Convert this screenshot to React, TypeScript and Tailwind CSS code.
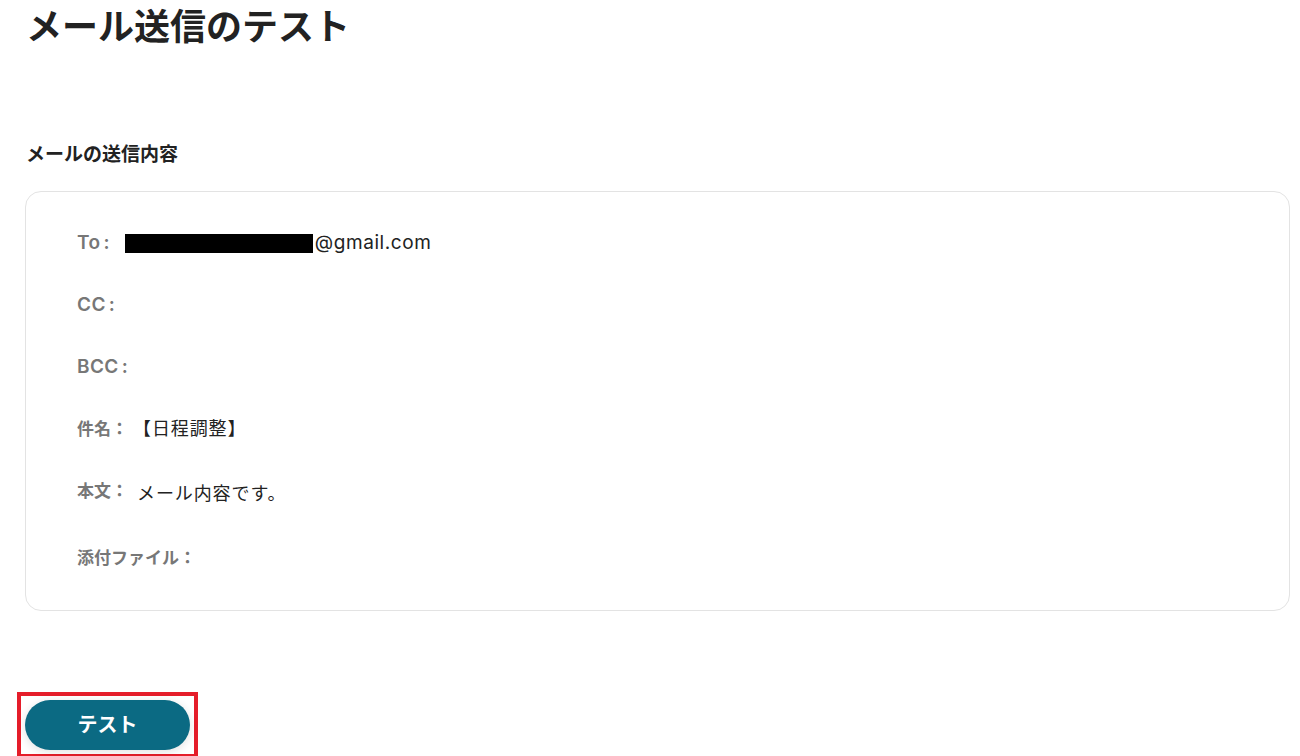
import React from "react";

const font = { fontFamily: '"Inter", "Noto Sans CJK JP", sans-serif' };

function Row({ label, latin = false, children, gap = "ml-[9px]" }: { label: string; latin?: boolean; children?: React.ReactNode; gap?: string }) {
  return (
    <div className="flex items-start">
      {latin ? (
        <span className="text-[19px] leading-[24px] font-semibold tracking-[0.02em] text-[#777777] shrink-0">
          {label}
          <span className="ml-[3px]">:</span>
        </span>
      ) : (
        <span className="text-[17px] leading-[24px] font-bold text-[#777777] shrink-0">{label}</span>
      )}
      <div className={`${gap} text-[18px] leading-[24px] tracking-[0.05em] text-[#222222]`}>{children}</div>
    </div>
  );
}

export default function App() {
  return (
    <div className="min-h-[756px] bg-white px-[25px] pr-[10px]" style={font}>
      <h1 className="text-[36px] leading-[54px] font-bold text-[#222222] pl-[1px]">メール送信のテスト</h1>
      <h2 className="mt-[88px] text-[19px] leading-[26px] font-bold text-[#222222] pl-[1px]">メールの送信内容</h2>
      <div className="mt-[23px] rounded-[16px] border border-[#e3e3e3] pl-[51px] pt-[39px] pb-[40px] flex flex-col gap-[38px]">
        <Row label="To" latin gap="ml-[15px]">
          <div className="flex items-center">
            <span className="inline-block w-[188px] h-[19px] bg-black" />
            <span className="ml-[2px] text-[19px] tracking-[0.03em] text-[#222222]">@gmail.com</span>
          </div>
        </Row>
        <Row label="CC" latin />
        <Row label="BCC" latin />
        <Row label="件名：">
          <span className="-ml-[4px]">【日程調整】</span>
        </Row>
        <Row label="本文：">
          <div className="pt-[3px] pb-[2px]">メール内容です。</div>
        </Row>
        <Row label="添付ファイル：" />
      </div>
      <div className="mt-[81px] inline-flex border-[4px] border-[#e51d2a] p-[4px] -ml-[8px]">
        <button className="w-[165px] h-[50px] rounded-full bg-[#0b6a83] text-white text-[20px] font-bold shadow-[0_2px_10px_rgba(0,0,0,0.12)]">
          テスト
        </button>
      </div>
    </div>
  );
}
